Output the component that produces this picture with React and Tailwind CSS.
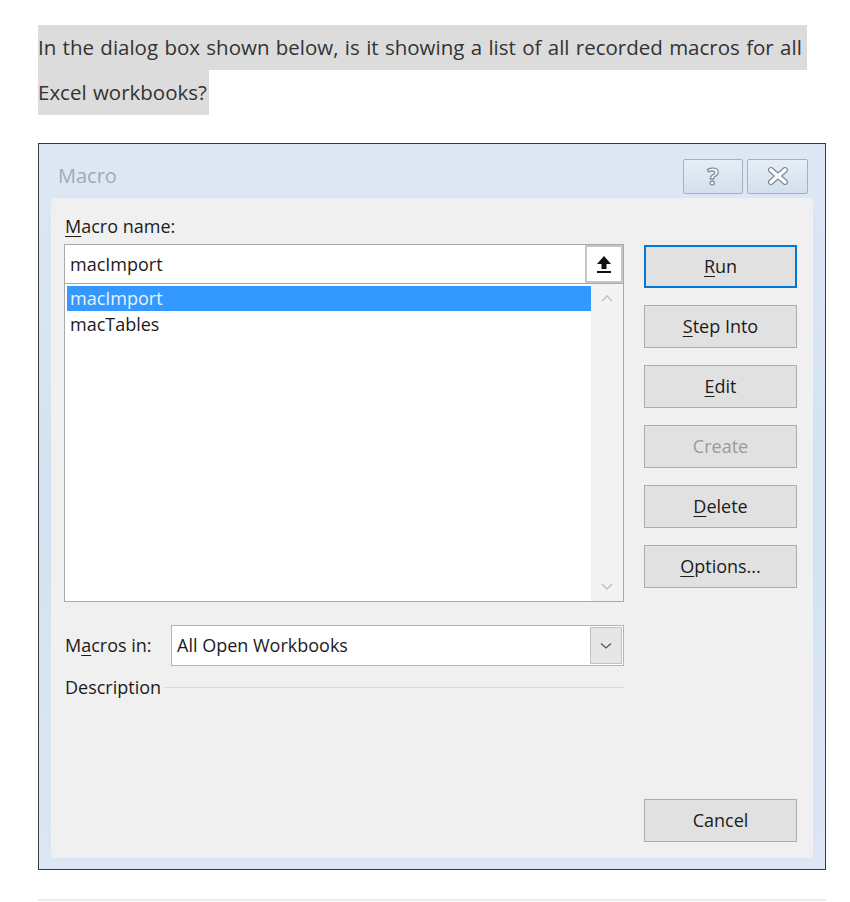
import React from 'react';

const ui = { fontFamily: '"Open Sans", "Noto Sans", Arial, sans-serif' };

function Mn({ before = '', letter, after = '' }) {
  return (
    <>
      {before}
      <span className="underline decoration-1 underline-offset-[3px]">{letter}</span>
      {after}
    </>
  );
}

const buttons = [
  { key: 'run', label: <Mn letter="R" after="un" />, focus: true },
  { key: 'step', label: <Mn letter="S" after="tep Into" /> },
  { key: 'edit', label: <Mn letter="E" after="dit" /> },
  { key: 'create', label: 'Create', disabled: true },
  { key: 'delete', label: <Mn letter="D" after="elete" /> },
  { key: 'options', label: <Mn letter="O" after="ptions..." /> },
];

function Chevron({ up }) {
  return (
    <svg width="12" height="8" viewBox="0 0 12 8" fill="none">
      <path d={up ? 'M1 7 L6 2 L11 7' : 'M1 1 L6 6 L11 1'} stroke="#c4c4c4" strokeWidth="1.6" />
    </svg>
  );
}

function DialogButton({ children, focus, disabled }) {
  return (
    <div
      className={`flex h-[43px] w-[153px] items-center justify-center bg-[#e1e1e1] text-[18px] ${
        focus ? 'border-2 border-[#0078d7]' : 'border border-[#adadad]'
      } ${disabled ? 'text-[#9a9a9a]' : 'text-[#1b1b1b]'}`}
    >
      {children}
    </div>
  );
}

export default function App() {
  return (
    <div className="h-[902px] w-[850px] overflow-hidden bg-white" style={ui}>
      {/* question */}
      <div className="pl-[38px] pt-[25px] text-[20.5px] text-[#333333] [word-spacing:1px]">
        <div className="inline-block h-[45px] bg-[#dcdcdc] pr-[5px] leading-[45px]">
          In the dialog box shown below, is it showing a list of all recorded macros for all
        </div>
        <div />
        <div className="inline-block h-[45px] bg-[#dcdcdc] pr-[2px] leading-[45px]">Excel workbooks?</div>
      </div>

      {/* dialog */}
      <div className="ml-[38px] mt-[28px] w-[788px] border border-[#3b3b3b] bg-gradient-to-b from-[#dde8f4] via-[#d3e1f0] to-[#dce7f3] px-[12px] pb-[11px]">
        <div className="flex h-[54px] items-center justify-between pt-[10px]">
          <span className="pl-[7px] text-[20px] text-[#9eabb8]">Macro</span>
          <div className="flex gap-[4px] pr-[5px]">
            <div className="flex h-[35px] w-[60px] items-center justify-center rounded-[2px] border border-[#a3b0be] bg-gradient-to-b from-[#e6eef7] to-[#d2dfed] text-[24px] font-bold leading-none text-white [-webkit-text-stroke:1.2px_#7f8a96]">
              ?
            </div>
            <div className="flex h-[35px] w-[61px] items-center justify-center rounded-[2px] border border-[#a3b0be] bg-gradient-to-b from-[#e6eef7] to-[#d2dfed]">
              <svg width="22" height="18" viewBox="0 0 22 18">
                <path d="M4 3 L18 15 M18 3 L4 15" stroke="#7f8a96" strokeWidth="6" strokeLinecap="round" />
                <path d="M4 3 L18 15 M18 3 L4 15" stroke="#ffffff" strokeWidth="3.6" strokeLinecap="round" />
              </svg>
            </div>
          </div>
        </div>

        <div className="flex h-[660px] gap-[20px] bg-[#f0f0f0] pl-[13px] pr-[16px]">
          {/* left column */}
          <div className="flex w-[561px] flex-col pt-[12px] text-[18px] text-[#1b1b1b]">
            <div className="h-[32px] pl-[1px] leading-[32px]">
              <Mn letter="M" after="acro name:" />
            </div>
            <div className="mt-[2px] flex h-[40px] items-center border border-[#a9a9a9] bg-white">
              <span className="flex-1 pl-[5px]">macImport</span>
              <div className="flex h-[38px] w-[38px] items-center justify-center border-2 border-[#c6c6c6] bg-white">
                <svg width="18" height="20" viewBox="0 0 18 20">
                  <path d="M9 2 L16 10 L11.5 10 L11.5 15 L6.5 15 L6.5 10 L2 10 Z" fill="#111111" />
                  <rect x="2" y="17" width="14" height="2" fill="#111111" />
                </svg>
              </div>
            </div>
            <div className="flex h-[318px] border border-[#a9a9a9] border-t-0 bg-white">
              <div className="flex-1 pl-[2px] pt-[2px]">
                <div className="h-[25px] bg-[#3399ff] pl-[3px] leading-[24px] text-[#e8f2ff]">macImport</div>
                <div className="h-[26px] pl-[3px] leading-[26px]">macTables</div>
              </div>
              <div className="flex w-[32px] flex-col items-center justify-between bg-[#f3f3f3] py-[10px]">
                <Chevron up />
                <Chevron />
              </div>
            </div>

            <div className="mt-[23px] flex h-[41px] items-center">
              <div className="w-[107px] pl-[1px]">
                <Mn before="M" letter="a" after="cros in:" />
              </div>
              <div className="flex h-[41px] flex-1 items-center border border-[#b4b4b4] bg-white">
                <span className="flex-1 pl-[5px]">All Open Workbooks</span>
                <div className="mr-[1px] flex h-[37px] w-[32px] items-center justify-center border border-[#c2c2c2] bg-[#e6e6e6]">
                  <svg width="12" height="8" viewBox="0 0 12 8" fill="none">
                    <path d="M1 1.5 L6 6 L11 1.5" stroke="#555555" strokeWidth="1.3" />
                  </svg>
                </div>
              </div>
            </div>

            <div className="mt-[7px] flex h-[28px] items-center">
              <span className="pl-[1px] leading-[28px]">Description</span>
              <div className="ml-[4px] h-px flex-1 bg-[#dadada]" />
            </div>
          </div>

          {/* right column */}
          <div className="flex flex-1 flex-col justify-between pb-[16px] pt-[47px]">
            <div className="flex flex-col gap-[17px]">
              {buttons.map((b) => (
                <DialogButton key={b.key} focus={b.focus} disabled={b.disabled}>
                  {b.label}
                </DialogButton>
              ))}
            </div>
            <DialogButton>Cancel</DialogButton>
          </div>
        </div>
      </div>

      <div className="ml-[38px] mt-[29px] h-[2px] w-[788px] bg-[#ececec]" />
    </div>
  );
}
